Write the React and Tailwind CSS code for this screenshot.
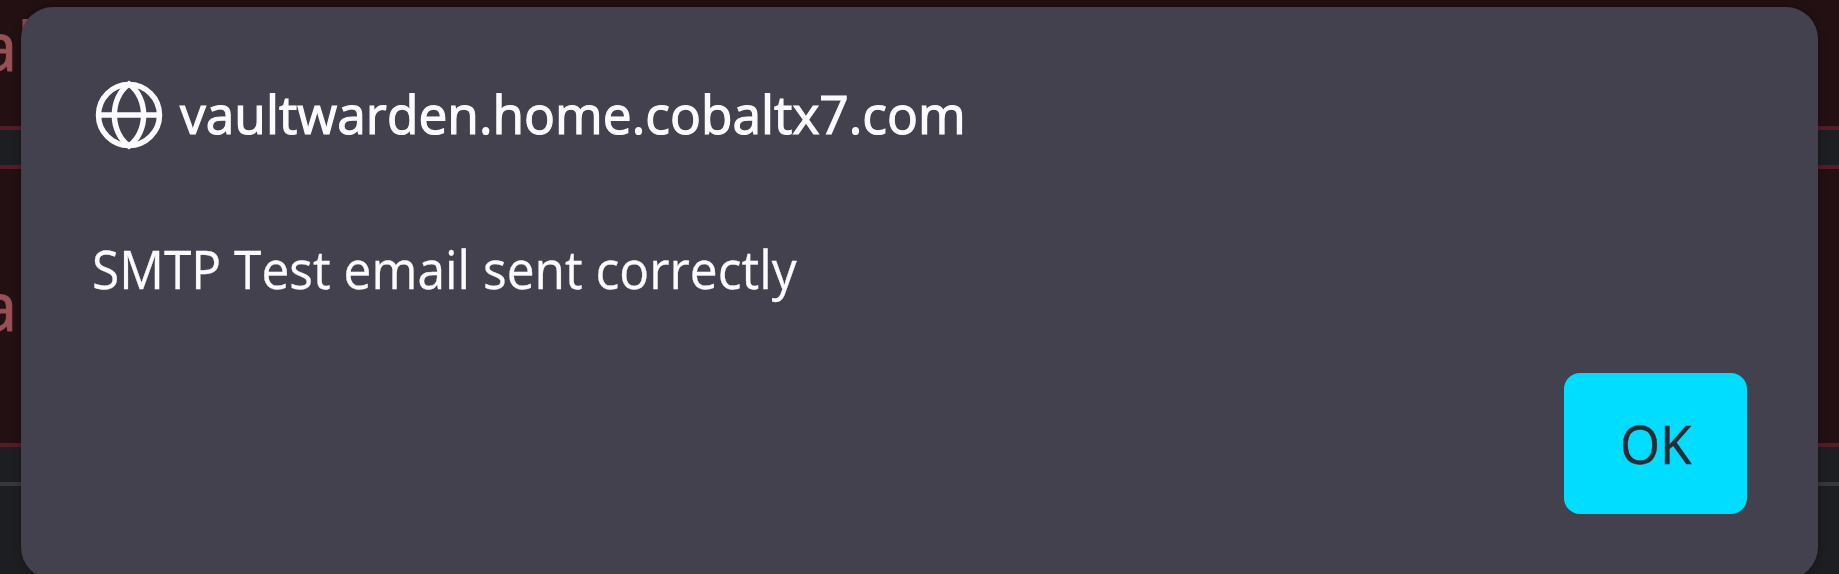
function GlobeIcon() {
  return (
    <svg
      className="ml-px mt-px h-[70px] w-[70px] shrink-0"
      viewBox="0 0 70 70"
      fill="none"
      stroke="#fbfbfe"
      strokeWidth="5.500"
    >
      <circle cx="35" cy="35" r="30.500" />
      <path d="M4 35H66" />
      <path d="M35 4C15.500 18 15.500 52 35 66C54.500 52 54.500 18 35 4Z" />
    </svg>
  );
}

function AlertText({ children }) {
  return (
    <div className="flex w-[60px] justify-start overflow-visible whitespace-nowrap text-[67px] leading-[80px] text-[#965056] [-webkit-text-stroke:1px_#965056]">
      <span className="-ml-[20px]">{children}</span>
    </div>
  );
}

export default function App() {
  return (
    <div className="grid h-[574px] w-[1839px] overflow-hidden bg-[#1c1e22] font-['Open_Sans','Noto_Sans',sans-serif]">
      <div className="col-start-1 row-start-1 flex flex-col">
        <div className="h-[130px] border-b-[4px] border-[#561c26] bg-[#231013] pt-[5px]">
          <AlertText>al</AlertText>
        </div>
        <div className="mt-[35px] h-[282px] border-y-[4px] border-[#561c26] bg-[#231013] pt-[96px]">
          <AlertText>a</AlertText>
        </div>
        <div className="mt-[35px] h-[4px] bg-[#36383c]" />
      </div>

      <div
        role="alertdialog"
        className="relative col-start-1 row-start-1 ml-[21px] mt-[7px] flex h-[572px] w-[1797px] flex-col rounded-[32px] bg-[#42414d] pl-[72px] pr-[71px] pt-[72px] text-[#fbfbfe] shadow-[0_0_8px_rgba(0,0,0,0.3)]"
      >
        <header className="flex h-[70px] items-center">
          <GlobeIcon />
          <h1 className="ml-[16px] origin-left scale-x-[0.972] whitespace-nowrap text-[53px] leading-[70px] [-webkit-text-stroke:1.2px_#fbfbfe]">
            vaultwarden.home.cobaltx7.com
          </h1>
        </header>
        <p className="-ml-px mt-[85px] h-[70px] origin-left scale-x-[0.937] whitespace-nowrap text-[53px] leading-[70px] [-webkit-text-stroke:0.3px_#fbfbfe]">
          SMTP Test email sent correctly
        </p>
        <div className="mt-[69px] flex justify-end">
          <button className="flex h-[141px] w-[183px] items-center justify-center rounded-[16px] bg-[#00ddff] text-[53px] leading-[70px] text-[#2b2a33] [-webkit-text-stroke:0.5px_#2b2a33]">
            <span className="scale-x-[0.970]">OK</span>
          </button>
        </div>
      </div>
    </div>
  );
}
